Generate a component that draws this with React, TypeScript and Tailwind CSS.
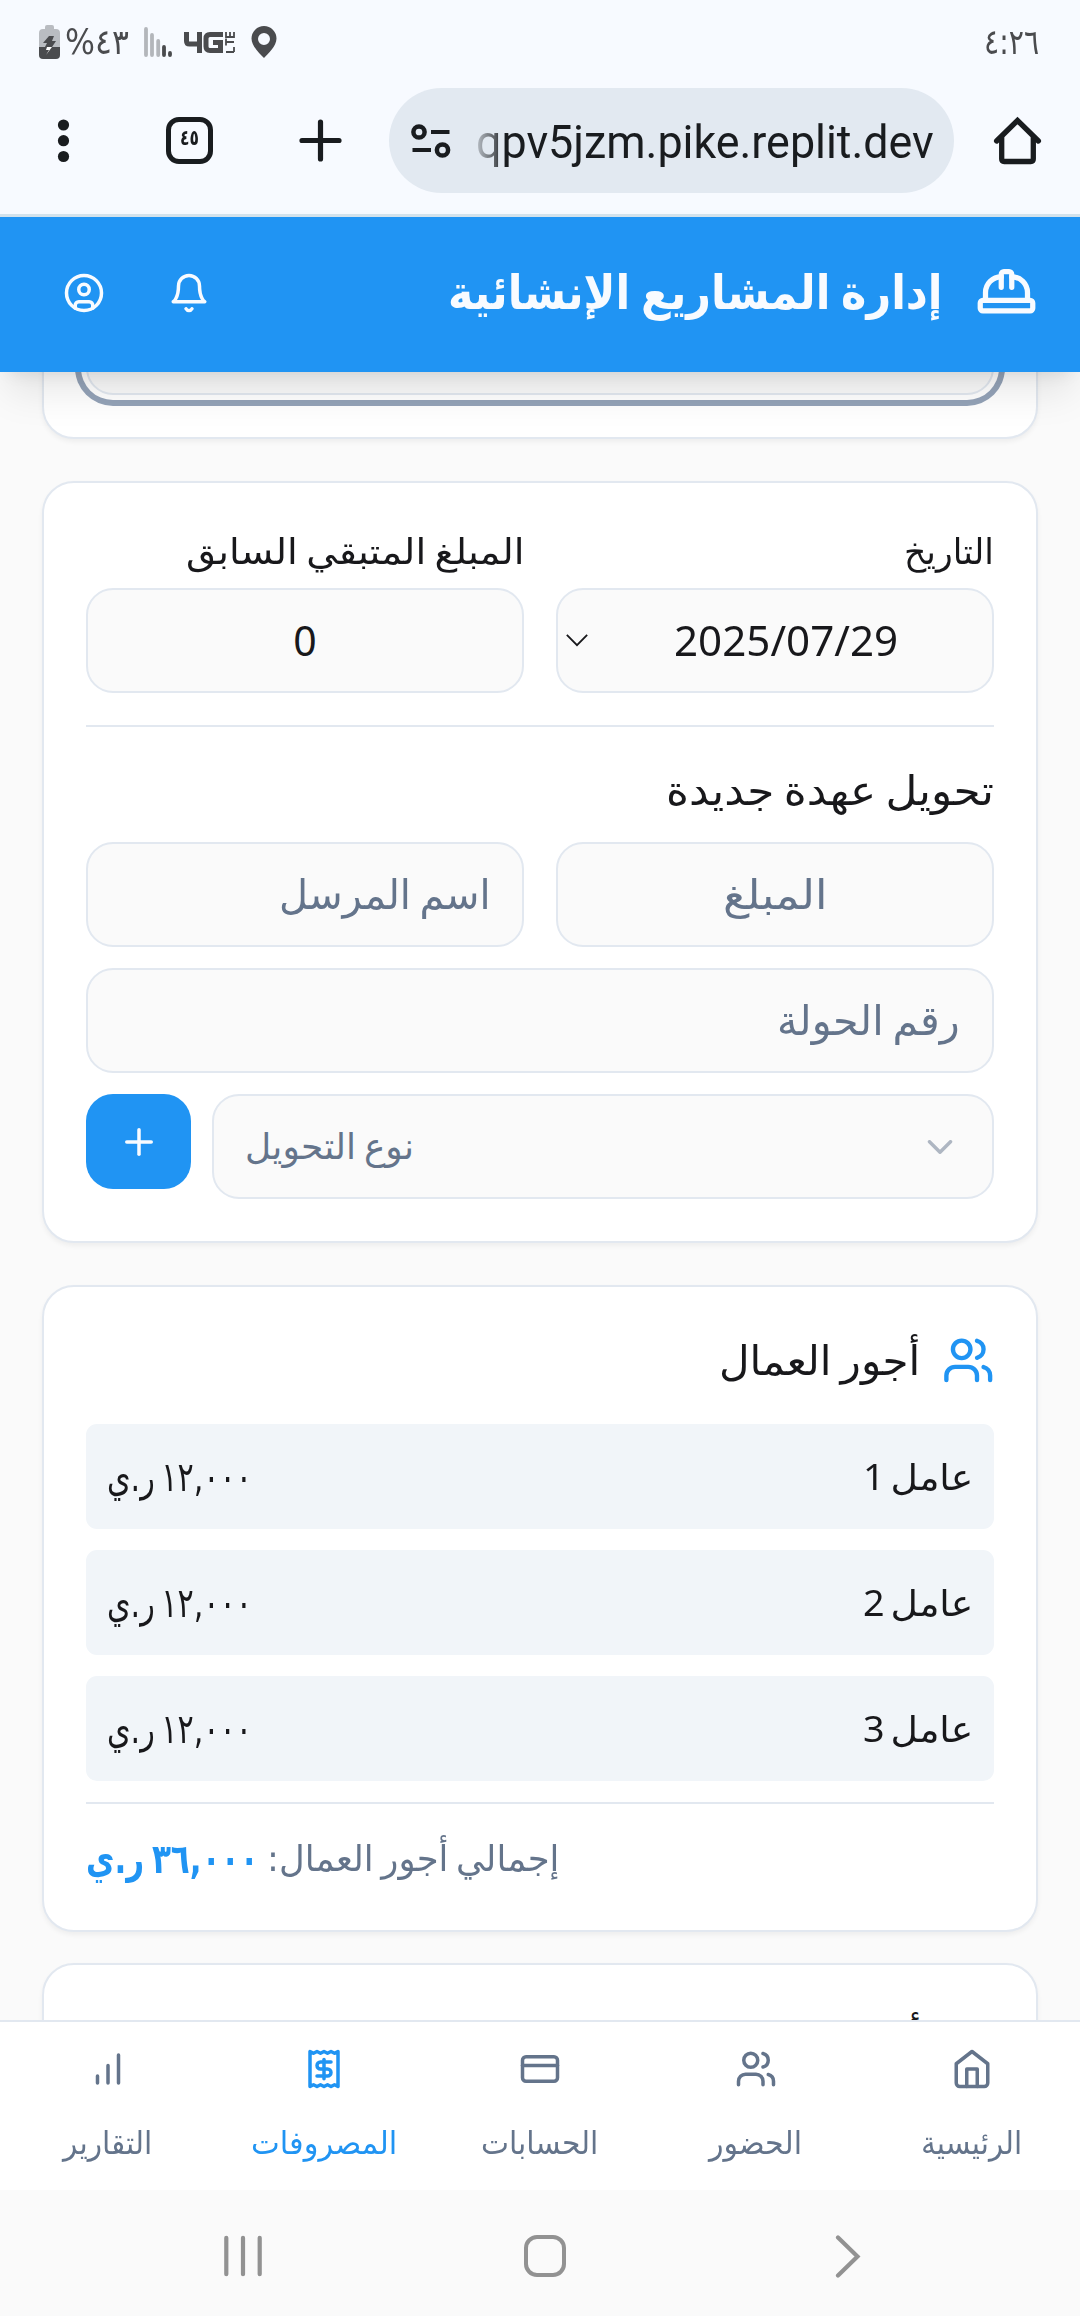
import { useLayoutEffect, useRef, useState, type ReactNode } from "react";
import { ChevronDown, CircleUser, CreditCard, Plus, Receipt, Users } from "lucide-react";

/** Single line of text, stretched or squeezed horizontally to fill `width`. */
function FitText({ width, className = "", children, ltr = false }: { width: number; className?: string; children: ReactNode; ltr?: boolean }) {
  const ref = useRef<HTMLSpanElement>(null);
  const [scale, setScale] = useState(1);
  useLayoutEffect(() => {
    if (ref.current) setScale(width / ref.current.offsetWidth);
  }, [width]);
  return (
    <span dir={ltr ? "ltr" : "rtl"} className={"block shrink-0 whitespace-nowrap [word-spacing:-0.1em] " + className} style={{ width }}>
      <span
        ref={ref}
        className={ltr ? "inline-block origin-left" : "inline-block origin-right"}
        style={{ transform: `scaleX(${scale})` }}
      >
        {children}
      </span>
    </span>
  );
}

function StatusBar() {
  return (
    <div dir="ltr" className="flex h-[88px] items-start justify-between pt-[25px] pr-[41px] pl-[39px] text-[#4a4b4e]">
      <div className="flex">
        <svg className="h-[34px] w-[21px]" viewBox="0 0 21 34">
          <path d="M6 4V2q0-2 2-2h5q2 0 2 2v2h2q4 0 4 4v14H0V8q0-4 4-4z" fill="#b9bcc1" />
          <path d="M0 22h21v8q0 4-4 4H4q-4 0-4-4z" fill="currentColor" />
          <path d="M10 11h5l-2 5h4l-4 6H6l2-4H4z" fill="currentColor" />
          <path d="M7 30l6-8H8l-1 3h3z" fill="#fff" />
        </svg>
        <FitText ltr width={64} className="ml-[5px] h-[34px] font-['DejaVu_Sans',sans-serif] text-[35px] leading-[34px]">
          %٤٣
        </FitText>
        <svg className="mt-[2px] ml-[15px] h-[31px] w-[28px]" viewBox="0 0 28 31" strokeWidth="3.8" strokeLinecap="round">
          <path d="M2 2v26M8 8v20M14.200 14v14" stroke="#b3b6bb" />
          <path d="M20 20v8M26 26v2" stroke="currentColor" />
        </svg>
        <div className="mt-[5px] ml-[12px] flex h-[24px] items-center">
          <svg className="h-[21px] w-[39px]" viewBox="0 0 39 21" fill="none" stroke="currentColor" strokeWidth="5">
            <path d="M2.500 0v9q0 3 3 3h10M15.500 0v21M39 2.500H26q-4 0-4 4v8q0 4 4 4h10.500v-8H29" />
          </svg>
          <svg className="ml-[2px] h-[22px] w-[10px]" viewBox="0 0 10 22" fill="none" stroke="currentColor" strokeWidth="1.800">
            <path d="M9 21H1M9 21v-5M1 11h8M1 7.500v7M9 1v5H1V1M5 1v5" />
          </svg>
        </div>
        <svg className="mt-[1px] ml-[16px] h-[32px] w-[26px]" viewBox="0 0 26 32">
          <path fillRule="evenodd" fill="currentColor" d="M13 0a12.500 12.500 0 0 1 12.500 12.500C25.500 20 17 28 13 32 9 28 .5 20 .5 12.500A12.500 12.500 0 0 1 13 0zm0 7a6 6 0 1 0 0 12 6 6 0 0 0 0-12z" />
        </svg>
      </div>
      <FitText ltr width={55} className="font-['DejaVu_Sans',sans-serif] text-[35px] leading-[34px]">
        ٤:٢٦
      </FitText>
    </div>
  );
}

function BrowserToolbar() {
  return (
    <div dir="ltr" className="flex h-[126px] items-start text-[#191c1f]">
      <svg className="mt-[31px] ml-[57px] h-[44px] w-[13px]" viewBox="0 0 13 44" fill="currentColor">
        <circle cx="6.500" cy="6" r="5.600" />
        <circle cx="6.500" cy="21.700" r="5.600" />
        <circle cx="6.500" cy="37.500" r="5.600" />
      </svg>
      <div className="mt-[29px] ml-[96px] flex h-[47px] w-[47px] items-start justify-center rounded-[13px] border-[5px] border-current font-['DejaVu_Sans',sans-serif] text-[22px] leading-[32px] font-bold">
        <FitText ltr width={19}>٤٥</FitText>
      </div>
      <svg className="mt-[31px] ml-[86px] h-[43px] w-[43px]" viewBox="0 0 43 43" stroke="currentColor" strokeWidth="5.200" strokeLinecap="round">
        <path d="M21.500 3v37M3 21.500h37" />
      </svg>
      <div className="ml-[47px] flex h-[105px] w-[565px] items-center rounded-full bg-[#e2e9f1] pl-[22px]">
        <svg className="h-[34px] w-[40px]" viewBox="0 0 40 34" fill="none" stroke="currentColor" strokeWidth="4.500">
          <circle cx="8" cy="8" r="5.600" />
          <path d="M20 8h18.500M1.500 26H20" strokeWidth="4.200" />
          <circle cx="31.500" cy="26" r="5.600" />
        </svg>
        <FitText
          ltr
          width={458}
          className="ml-[25px] pt-[2px] font-['Roboto',sans-serif] text-[46px] leading-[60px] [mask-image:linear-gradient(to_right,rgba(0,0,0,.2),rgba(0,0,0,.7)_20px,#000_26px)]"
        >
          qpv5jzm.pike.replit.dev
        </FitText>
      </div>
      <svg className="mt-[28px] ml-[39px] h-[49px] w-[49px]" viewBox="0 0 49 49" fill="none" stroke="currentColor" strokeWidth="5.300" strokeLinecap="round" strokeLinejoin="miter">
        <path d="M3.600 25L24.500 4.500 45.400 25" />
        <path d="M8.700 22v21q0 2.500 2.500 2.500h26.600q2.500 0 2.500-2.500V22" />
      </svg>
    </div>
  );
}

function AppHeader() {
  return (
    <header className="relative z-10 flex h-[158px] items-center justify-between border-t-[3px] border-[#d2e2ec] bg-[#2094f3] pr-[42px] pb-[4px] pl-[63px] text-[#f8fbff] shadow-[0_26px_39px_-8px_rgba(0,0,0,0.1),0_10px_16px_-10px_rgba(0,0,0,0.1)]">
      <div className="flex items-center">
        <svg className="h-[63px] w-[63px]" viewBox="0 0 24 24" fill="none" stroke="currentColor" strokeWidth="2" strokeLinecap="round" strokeLinejoin="round">
          <path d="M2 18a1 1 0 0 0 1 1h18a1 1 0 0 0 1-1v-2a1 1 0 0 0-1-1H3a1 1 0 0 0-1 1v2z" />
          <path d="M10 10V5a1 1 0 0 1 1-1h2a1 1 0 0 1 1 1v5" />
          <path d="M4 15v-3a6 6 0 0 1 6-6M14 6a6 6 0 0 1 6 6v3" />
        </svg>
        <FitText width={495} className="mr-[32px] font-['DejaVu_Sans',sans-serif] text-[47px] leading-[63px] font-bold">
          إدارة المشاريع الإنشائية
        </FitText>
      </div>
      <div className="flex items-center gap-[63px]">
        <svg className="h-[42px] w-[42px]" viewBox="0 0 24 24" fill="none" stroke="currentColor" strokeWidth="2" strokeLinecap="round" strokeLinejoin="round">
          <path d="M6 8a6 6 0 0 1 12 0c0 7 3 9 3 9H3s3-2 3-9" />
          <path d="M10.300 21a1.940 1.940 0 0 0 3.400 0" />
        </svg>
        <CircleUser size={42} />
      </div>
    </header>
  );
}

const card = "shrink-0 rounded-[32px] border-2 border-[#e2e8f0] bg-white px-[42px] shadow-[0_3px_5px_rgba(0,0,0,0.05)]";
const field = "flex h-[105px] items-center rounded-[27px] border-2 border-[#e2e8f0] bg-[#fafafa]";

function TransferCard() {
  return (
    <section className={card + " mt-[42px] h-[762px] pt-[42px]"}>
      <div className="grid grid-cols-2 gap-x-[32px] text-[#18181b]">
        <div>
          <FitText width={90} className="mb-[9px] text-[35px] leading-[54px]">التاريخ</FitText>
          <div className={field + " justify-between pr-[94px] pl-[7px]"}>
            <FitText ltr width={224} className="font-['Noto_Sans',sans-serif] text-[41px]">2025/07/29</FitText>
            <svg className="h-[15px] w-[24px]" viewBox="0 0 26 16" fill="none" stroke="currentColor" strokeWidth="2">
              <path d="M2 2l11 11L24 2" />
            </svg>
          </div>
        </div>
        <div>
          <FitText width={338} className="mb-[9px] text-[35px] leading-[54px]">المبلغ المتبقي السابق</FitText>
          <div className={field + " justify-center font-['Noto_Sans',sans-serif] text-[41px]"}>0</div>
        </div>
      </div>
      <div className="mt-[32px] border-t-2 border-[#e2e8f0] pt-[34px]">
        <FitText width={328} className="mb-[21px] text-[41px] leading-[60px] text-[#18181b]">تحويل عهدة جديدة</FitText>
        <div className="flex flex-col gap-[21px] text-[41px] text-[#64748b]">
          <div className="grid grid-cols-2 gap-x-[32px]">
            <div className={field + " justify-center pt-[2px]"}>
              <FitText width={104}>المبلغ</FitText>
            </div>
            <div className={field + " px-[31px] pt-[2px]"}>
              <FitText width={212}>اسم المرسل</FitText>
            </div>
          </div>
          <div className={field + " px-[32px] pt-[2px]"}>
            <FitText width={183}>رقم الحولة</FitText>
          </div>
          <div className="flex items-start gap-[21px]">
            <div className={field + " flex-1 justify-between px-[31px]"}>
              <ChevronDown size={42} className="opacity-50" />
              <FitText width={169} className="text-[36px]">نوع التحويل</FitText>
            </div>
            <button className="flex h-[95px] w-[105px] items-center justify-center rounded-[27px] bg-[#2094f3] text-[#f8fbff]">
              <Plus size={42} />
            </button>
          </div>
        </div>
      </div>
    </section>
  );
}

function WagesCard() {
  return (
    <section className={card + " mt-[42px] h-[647px] pt-[42px]"}>
      <div className="mb-[29px] flex h-[66px] items-center">
        <Users size={52.500} className="mt-[-4px] text-[#2094f3]" />
        <FitText width={201} className="mr-[21px] text-[41px] text-[#18181b]">أجور العمال</FitText>
      </div>
      <div className="flex flex-col gap-[21px] text-[#18181b]">
        {["عامل 1", "عامل 2", "عامل 3"].map((worker) => (
          <div key={worker} className="flex h-[105px] items-center justify-between rounded-[11px] bg-[#f1f5f9] px-[21px]">
            <FitText width={110} className="font-['Noto_Sans','DejaVu_Sans',sans-serif] text-[36px]">{worker}</FitText>
            <FitText width={145} className="pt-[2px] text-[41px]">١٢,٠٠٠ ر.ي</FitText>
          </div>
        ))}
      </div>
      <div className="mt-[21px] flex items-center justify-end gap-[8px] border-t-2 border-[#e2e8f0] pt-[26px] leading-[58px]">
        <FitText width={292} className="text-[36px] text-[#64748b]">إجمالي أجور العمال:</FitText>
        <FitText width={173} className="text-[41px] font-bold text-[#2094f3]">٣٦,٠٠٠ ر.ي</FitText>
      </div>
    </section>
  );
}

function BottomNav() {
  const stroke = { fill: "none", stroke: "currentColor", strokeWidth: 2, strokeLinecap: "round", strokeLinejoin: "round" } as const;
  const items = [
    {
      label: "الرئيسية",
      width: 101,
      icon: (
        <svg className="h-[42px] w-[42px]" viewBox="0 0 24 24" {...stroke}>
          <path d="m3 9 9-7 9 7v11a2 2 0 0 1-2 2H5a2 2 0 0 1-2-2z" />
          <path d="M9 22V12h6v10" />
        </svg>
      ),
    },
    { label: "الحضور", width: 93, icon: <Users size={42} /> },
    { label: "الحسابات", width: 117, icon: <CreditCard size={42} /> },
    { label: "المصروفات", width: 146, icon: <Receipt size={42} />, active: true },
    {
      label: "التقارير",
      width: 89,
      icon: (
        <svg className="h-[42px] w-[42px]" viewBox="0 0 24 24" {...stroke}>
          <path d="M12 20V10M18 20V4M6 20v-4" />
        </svg>
      ),
    },
  ];
  return (
    <nav className="relative z-10 grid h-[170px] grid-cols-5 border-t-2 border-[#e2e8f0] bg-white">
      {items.map((item) => (
        <div key={item.label} className={"flex flex-col items-center pt-[26px] " + (item.active ? "text-[#2094f3]" : "text-[#64748b]")}>
          {item.icon}
          <FitText width={item.width} className="mt-[26px] text-[32px] leading-[54px]">{item.label}</FitText>
        </div>
      ))}
    </nav>
  );
}

function SystemNav() {
  return (
    <div dir="ltr" className="flex h-[126px] items-start bg-[#fafafa] pt-[45px]">
      <svg className="ml-[223px] h-[42px] w-[40px]" viewBox="0 0 40 42" stroke="#929292" strokeWidth="4.200" strokeLinecap="round">
        <path d="M3.300 2.800v36.400M20 2.800v36.400M36.700 2.800v36.400" />
      </svg>
      <div className="ml-[261px] h-[42px] w-[42px] rounded-[13px] border-4 border-[#929292]" />
      <svg className="ml-[268px] h-[44px] w-[28px]" viewBox="0 0 28 44" fill="none" stroke="#929292" strokeWidth="4.200" strokeLinecap="round">
        <path d="M4 2.500L23.500 21.500 4 40.500" />
      </svg>
    </div>
  );
}

export default function App() {
  return (
    <div dir="rtl" className="flex h-[2316px] w-[1080px] flex-col overflow-hidden bg-[#fafafa] font-['DejaVu_Sans',sans-serif]">
      <div className="bg-[#f7faff]">
        <StatusBar />
        <BrowserToolbar />
      </div>
      <AppHeader />
      <main className="flex h-[1648px] flex-col overflow-hidden px-[42px]">
        <section className={card + " -mt-[64px] h-[131px]"}>
          <div className="h-[85px] rounded-[27px] border-2 border-[#e2e8f0] bg-[#fafafa] ring-[6px] ring-[#94a3b8] ring-offset-[5px] ring-offset-white" />
        </section>
        <TransferCard />
        <WagesCard />
        <section className={card + " mt-[31px] h-[200px] pt-[42px]"}>
          <div className="flex h-[66px] items-center pr-[73px] text-[41px] text-[#18181b]">أ</div>
        </section>
      </main>
      <BottomNav />
      <SystemNav />
    </div>
  );
}
